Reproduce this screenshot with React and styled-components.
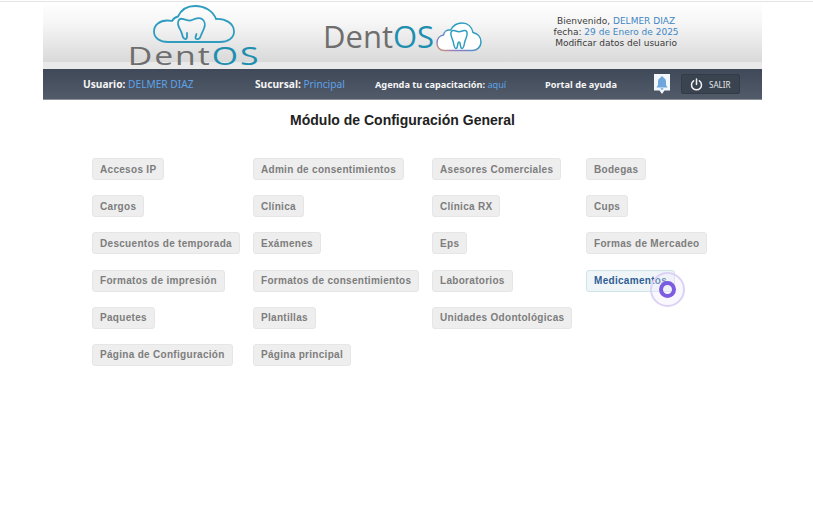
import styled, { createGlobalStyle } from "styled-components";

const GlobalStyle = createGlobalStyle`
  html, body {
    margin: 0;
    padding: 0;
    background: #fff;
  }
`;

const configLinks = [
  ["Accesos IP", "Admin de consentimientos", "Asesores Comerciales", "Bodegas"],
  ["Cargos", "Clínica", "Clínica RX", "Cups"],
  ["Descuentos de temporada", "Exámenes", "Eps", "Formas de Mercadeo"],
  ["Formatos de impresión", "Formatos de consentimientos", "Laboratorios", "Medicamentos"],
  ["Paquetes", "Plantillas", "Unidades Odontológicas", ""],
  ["Página de Configuración", "Página principal", "", ""],
];

const BigCloud = () => (
  <svg width="82" height="38" viewBox="0 0 82 38" fill="none" stroke="#2f9cc0" strokeWidth="1.800" strokeLinecap="round">
    <path d="M15 37C7 37 1 33 1 26.500C1 20 7 15.500 14 15.500C15.500 15.500 17 15.500 19 16C20.500 13 22.500 12 25 11.500C28 5 34 1 42 1C52 1 60 6 63 14C72 13.500 81 18 81 26.500C81 33 75 37 67 37Z" />
    <path d="M30 14C26.500 13 24.500 15.500 25 19C25.500 23 28 25 29 29C29.500 31.500 30.500 34 32.500 34C34.500 34 34 30.500 34 28" />
    <path d="M30 14C33 15 36 16.500 39 15C42 13.500 46 12 49 14C52 16 52.500 20 51 23.500C49.500 27 48.500 29 47.500 31.500C46.800 33.500 45 34.500 43.500 34C41.500 33.500 43 31 43.500 29" />
  </svg>
);

const SmallCloud = () => (
  <svg width="46" height="30" viewBox="0 0 46 30" fill="none">
    <defs>
      <linearGradient id="cloudEdge" x1="0" y1="1" x2="0.5" y2="0.4">
        <stop offset="0" stopColor="#d99a63" />
        <stop offset="0.35" stopColor="#8e7fc9" />
        <stop offset="1" stopColor="#2f9cc0" />
      </linearGradient>
    </defs>
    <path
      d="M8 28.500C3.500 28.500 1 25 1 21C1 16.500 4 13.500 7.500 13C8 9.500 11 7.500 14.500 8C17 3.500 21.500 1 26 1C32 1 36 5 37 10.500C41.500 11.500 45 15 45 20C45 25 41 28.500 36 28.500Z"
      fill="#fff"
      stroke="url(#cloudEdge)"
      strokeWidth="1.500"
    />
    <path
      d="M18 8.500C15.500 8 14.500 10 15 13C15.500 16 17 18 17.500 21C18 24 18.500 26.500 20 26.500C21.500 26.500 21.500 23 22 21C22.500 19.500 23.500 19.500 24 21C24.500 23 24.500 26.500 26 26.500C27.500 26.500 28 24 28.500 21C29 18 30.500 16 31 13C31.500 10 30.500 8 28 8.500C26.500 8.800 25 9.800 23 9.800C21 9.800 19.500 8.800 18 8.500Z"
      fill="#fff"
      stroke="#2f9cc0"
      strokeWidth="1.500"
    />
  </svg>
);

const BellIcon = () => (
  <svg width="16" height="21" viewBox="0 0 16 21">
    <path d="M0 0H16V16.500H10.500L8 20L5.500 16.500H0Z" fill="#f3f7fb" />
    <path
      d="M8 2.500C9 2.500 9.500 3 9.500 3.800C11.300 4.500 12 6 12 8V11L13.500 13.500H2.500L4 11V8C4 6 4.700 4.500 6.500 3.800C6.500 3 7 2.500 8 2.500ZM6.500 14.300H9.500C9.500 15.200 8.800 15.800 8 15.800C7.200 15.800 6.500 15.200 6.500 14.300Z"
      fill="#6ea6dc"
    />
  </svg>
);

const PowerIcon = () => (
  <svg width="13" height="13" viewBox="0 0 13 13" fill="none" stroke="#f2f2f2" strokeWidth="1.500" strokeLinecap="round">
    <path d="M6.500 1V6.500" />
    <path d="M3.600 2.800A5 5 0 1 0 9.400 2.800" />
  </svg>
);

const App = () => {
  return (
    <Page>
      <GlobalStyle />
      <TopLine />
      <Wrapper>
        <Banner>
          <StackedLogo>
            <BigCloud />
            <StackedWord>
              Dent<Accent>OS</Accent>
            </StackedWord>
          </StackedLogo>
          <InlineLogo>
            <InlineWord>
              Dent<Accent>OS</Accent>
            </InlineWord>
            <SmallCloud />
          </InlineLogo>
          <Welcome>
            <div>
              Bienvenido, <Highlight>DELMER DIAZ</Highlight>
            </div>
            <div>
              fecha: <Highlight>29 de Enero de 2025</Highlight>
            </div>
            <div>Modificar datos del usuario</div>
          </Welcome>
        </Banner>
        <NavBar>
          <NavUser>
            Usuario: <NavValue>DELMER DIAZ</NavValue>
          </NavUser>
          <NavBranch>
            Sucursal: <NavValue>Principal</NavValue>
          </NavBranch>
          <NavAgenda>
            Agenda tu capacitación: <NavValue>aquí</NavValue>
          </NavAgenda>
          <NavHelp>Portal de ayuda</NavHelp>
          <BellBox>
            <BellIcon />
          </BellBox>
          <ExitButton>
            <PowerIcon />
            SALIR
          </ExitButton>
        </NavBar>
        <Title>Módulo de Configuración General</Title>
        <LinkGrid>
          {configLinks.flat().map((label, i) =>
            label ? (
              <LinkCell key={i}>
                <ConfigLink $active={label === "Medicamentos"}>
                  {label}
                  {label === "Medicamentos" && (
                    <ClickRing>
                      <ClickDot />
                    </ClickRing>
                  )}
                </ConfigLink>
              </LinkCell>
            ) : (
              <LinkCell key={i} />
            )
          )}
        </LinkGrid>
      </Wrapper>
    </Page>
  );
};

const Page = styled.div`
  width: 813px;
  height: 506px;
  overflow: hidden;
  background: #fff;
`;
const TopLine = styled.div`
  margin-top: 1px;
  height: 1px;
  background: #e4e4e4;
`;
const Wrapper = styled.div`
  width: 719px;
  margin-left: 43px;
`;
const Banner = styled.div`
  height: 60px;
  border-bottom: 7px solid #e9e9e9;
  background: linear-gradient(to bottom, #ffffff 0%, #f6f6f6 35%, #d9d9d9 100%);
  display: flex;
  align-items: flex-start;
`;
const StackedLogo = styled.div`
  margin-left: 86px;
  width: 130px;
  height: 67px;
  margin-top: 3px;
  display: flex;
  flex-direction: column;
  align-items: center;
`;
const StackedWord = styled.div`
  font-family: "Open Sans", sans-serif;
  font-size: 26px;
  line-height: 19px;
  letter-spacing: 1.500px;
  color: #6e6e6e;
  margin-top: 3px;
  white-space: nowrap;
  transform: scaleX(1.300);
`;
const Accent = styled.span`
  color: #1f8fb0;
`;
const InlineLogo = styled.div`
  margin-left: 64px;
  margin-top: 19px;
  display: flex;
  align-items: center;
  gap: 2px;
`;
const InlineWord = styled.div`
  font-family: "Open Sans", sans-serif;
  font-size: 31px;
  line-height: 31px;
  color: #6e6e6e;
  white-space: nowrap;
`;
const Welcome = styled.div`
  margin-left: 69px;
  margin-top: 14px;
  width: 130px;
  font-family: "DejaVu Sans", sans-serif;
  font-size: 9px;
  line-height: 11px;
  color: #3a3a3a;
  text-align: center;
  white-space: nowrap;
`;
const Highlight = styled.span`
  color: #3f86c4;
`;
const NavBar = styled.div`
  height: 30px;
  background: linear-gradient(to bottom, #3f4959, #525b69);
  border-bottom: 1px solid #8b9096;
  display: flex;
  align-items: center;
  font-family: "Noto Sans", sans-serif;
  font-size: 10.200px;
  font-weight: bold;
  color: #f5f5f5;
  white-space: nowrap;
`;
const NavValue = styled.span`
  color: #5ea2e8;
  font-weight: normal;
`;
const NavUser = styled.div`
  margin-left: 40px;
  width: 172px;
`;
const NavBranch = styled.div`
  width: 120px;
`;
const NavAgenda = styled.div`
  width: 170px;
  font-size: 9.200px;
`;
const NavHelp = styled.div`
  width: 109px;
  font-size: 9.200px;
`;
const BellBox = styled.div`
  width: 20px;
  display: flex;
`;
const ExitButton = styled.div`
  width: 59px;
  height: 20px;
  margin-left: 7px;
  background: #3a4350;
  border: 1px solid #333b47;
  border-radius: 2px;
  display: flex;
  align-items: center;
  gap: 6px;
  padding-left: 8px;
  box-sizing: border-box;
  font-size: 8px;
  font-weight: normal;
  color: #e8e8e8;
`;
const Title = styled.h1`
  margin: 12px 0 0;
  text-align: center;
  font-family: "Liberation Sans", sans-serif;
  font-size: 14px;
  line-height: 17px;
  font-weight: bold;
  color: #222;
`;
const LinkGrid = styled.div`
  margin: 29px 0 0 49px;
  display: grid;
  grid-template-columns: 148px 166px 141px auto;
  column-gap: 13px;
  grid-auto-rows: 37.200px;
`;
const LinkCell = styled.div`
  display: flex;
  align-items: flex-start;
`;
const ConfigLink = styled.div`
  position: relative;
  height: 22px;
  box-sizing: border-box;
  padding: 0 7px;
  display: flex;
  align-items: center;
  border-radius: 3px;
  border: 1px solid ${(props) => (props.$active ? "#cfe3ea" : "#e6e6e6")};
  background: ${(props) => (props.$active ? "#f0f6f8" : "#eeeeee")};
  color: ${(props) => (props.$active ? "#2f5d95" : "#7d7d7d")};
  font-family: "Liberation Sans", sans-serif;
  font-size: 10px;
  font-weight: bold;
  letter-spacing: 0.300px;
  white-space: nowrap;
`;
const ClickRing = styled.span`
  position: absolute;
  left: 63px;
  top: 1px;
  width: 35px;
  height: 35px;
  box-sizing: border-box;
  border-radius: 50%;
  border: 2px solid #dcd2f5;
  background: rgba(240, 235, 252, 0.35);
  display: flex;
  align-items: center;
  justify-content: center;
`;
const ClickDot = styled.span`
  width: 17px;
  height: 17px;
  box-sizing: border-box;
  border-radius: 50%;
  border: 4px solid #7c5ce0;
`;

export default App;
